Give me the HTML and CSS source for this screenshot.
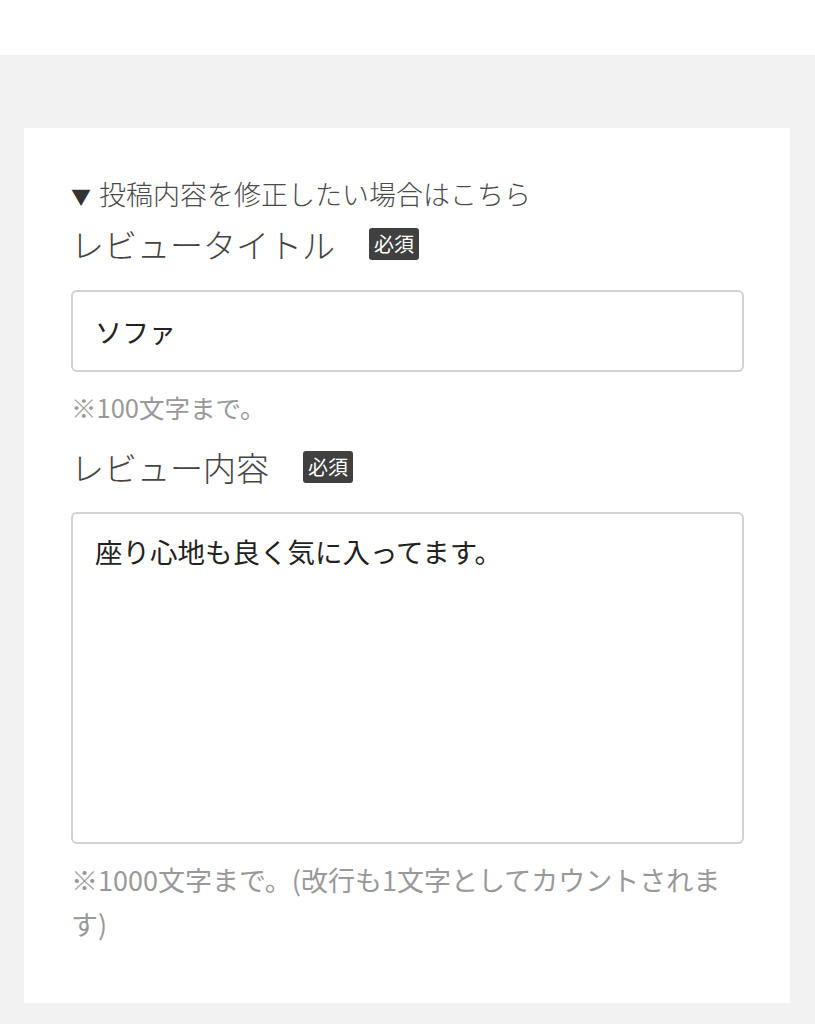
FILE: index.html
```html
<!DOCTYPE html>
<html lang="ja">
<head>
<meta charset="utf-8">
<title>レビュー投稿</title>
<link rel="stylesheet" href="styles.css">
</head>
<body>
<header class="topbar"></header>
<main class="page">
  <section class="card">
    <div class="summary"><span class="caret">▼</span> 投稿内容を修正したい場合はこちら</div>
    <div class="field">
      <div class="label-row">
        <span class="label">レビュータイトル</span>
        <span class="badge">必須</span>
      </div>
      <div class="input">ソファ</div>
      <p class="note">※100文字まで。</p>
    </div>
    <div class="field">
      <div class="label-row">
        <span class="label">レビュー内容</span>
        <span class="badge">必須</span>
      </div>
      <div class="input textarea">座り心地も良く気に入ってます。</div>
      <p class="note note-long">※1000文字まで。(改行も1文字としてカウントされます)</p>
    </div>
  </section>
</main>
</body>
</html>
```
FILE: styles.css
```css
* { box-sizing: border-box; }
html, body { margin: 0; padding: 0; }
body {
  font-family: "Noto Sans CJK JP", "Noto Sans", sans-serif;
  background: #f2f2f2;
  color: #444;
  width: 815px;
  height: 1024px;
  overflow: hidden;
}
.topbar {
  height: 55px;
  background: #fff;
}
.page {
  padding: 73px 25px 0 24px;
}
.card {
  background: #fff;
  padding: 46px 46px 56px 47px;
  height: 875px;
}
.summary {
  height: 39px;
  font-size: 27px;
  line-height: 39px;
  color: #4a4a4a;
  font-weight: 300;
}
.caret {
  font-size: 20px;
  line-height: 1;
  color: #333;
  margin-right: 2px;
}
.field { display: flex; flex-direction: column; }
.label-row {
  display: flex;
  align-items: center;
  gap: 34px;
  height: 48px;
  margin-top: 7px;
}
.field + .field .label-row { margin-top: 17px; }
.label {
  font-size: 33px;
  line-height: 48px;
  color: #444;
  font-weight: 300;
}
.badge {
  background: #404040;
  color: #fff;
  font-size: 20px;
  line-height: 32px;
  height: 32px;
  padding: 0 5px;
  border-radius: 3px;
}
.input {
  margin-top: 22px;
  height: 82px;
  border: 2px solid #d2d2d2;
  border-radius: 6px;
  padding: 0 22px;
  display: flex;
  align-items: center;
  font-size: 27px;
  color: #222;
}
.textarea {
  margin-top: 21px;
  height: 332px;
  align-items: flex-start;
  padding-top: 18px;
  line-height: 39px;
  font-size: 27.5px;
}
.note {
  margin: 15px 0 0;
  font-size: 25.5px;
  line-height: 39px;
  color: #999;
}
.note-long {
  margin-top: 14px;
  line-height: 44px;
  font-size: 27px;
}
```
